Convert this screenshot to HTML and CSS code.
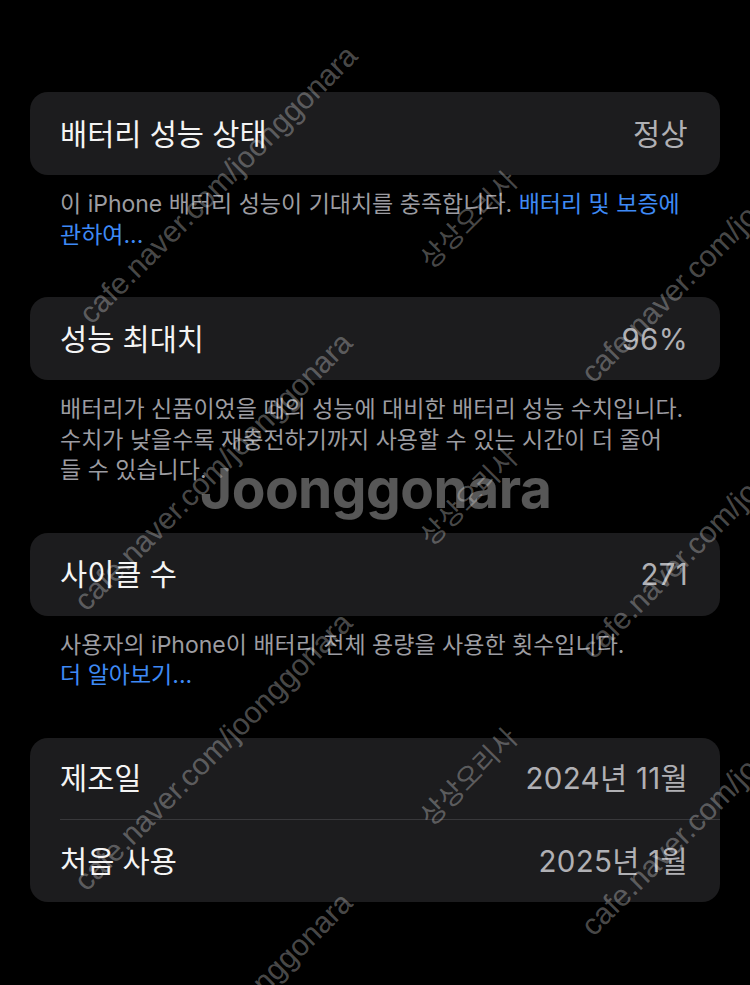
FILE: index.html
```html
<!DOCTYPE html>
<html lang="ko">
<head>
<meta charset="utf-8">
<title>배터리 성능 상태</title>
<link rel="stylesheet" href="styles.css">
</head>
<body>
<main class="screen">
  <section class="group">
    <div class="card">
      <div class="row"><span class="label">배터리 성능 상태</span><span class="value">정상</span></div>
    </div>
    <p class="footer">이 iPhone 배터리 성능이 기대치를 충족합니다. <a class="link">배터리 및 보증에<br>관하여...</a></p>
  </section>

  <section class="group">
    <div class="card">
      <div class="row"><span class="label">성능 최대치</span><span class="value">96%</span></div>
    </div>
    <p class="footer">배터리가 신품이었을 때의 성능에 대비한 배터리 성능 수치입니다.<br>수치가 낮을수록 재충전하기까지 사용할 수 있는 시간이 더 줄어<br>들 수 있습니다.</p>
  </section>

  <section class="group">
    <div class="card">
      <div class="row"><span class="label">사이클 수</span><span class="value">271</span></div>
    </div>
    <p class="footer">사용자의 iPhone이 배터리 전체 용량을 사용한 횟수입니다.<br><a class="link">더 알아보기...</a></p>
  </section>

  <section class="group">
    <div class="card">
      <div class="row"><span class="label">제조일</span><span class="value">2024년 11월</span></div>
      <div class="sep"></div>
      <div class="row"><span class="label">처음 사용</span><span class="value">2025년 1월</span></div>
    </div>
  </section>
</main>

<div class="watermarks" aria-hidden="true">
  <span class="wm wm-url" style="left:95px;top:299px">cafe.naver.com/joonggonara</span>
  <span class="wm wm-url" style="left:90px;top:586px">cafe.naver.com/joonggonara</span>
  <span class="wm wm-url" style="left:90px;top:866px">cafe.naver.com/joonggonara</span>
  <span class="wm wm-url" style="left:90px;top:1146px">cafe.naver.com/joonggonara</span>
  <span class="wm wm-url" style="left:597px;top:358px">cafe.naver.com/joonggonara</span>
  <span class="wm wm-url" style="left:597px;top:634px">cafe.naver.com/joonggonara</span>
  <span class="wm wm-url" style="left:597px;top:911px">cafe.naver.com/joonggonara</span>
  <span class="wm wm-kr" style="left:433px;top:245px">상상오리사</span>
  <span class="wm wm-kr" style="left:433px;top:522px">상상오리사</span>
  <span class="wm wm-kr" style="left:433px;top:802px">상상오리사</span>
  <span class="wm-logo">Joonggonara</span>
</div>
</body>
</html>
```

FILE: styles.css
```css
html, body {
  margin: 0;
  padding: 0;
  background: #000;
}

body {
  position: relative;
  width: 750px;
  height: 985px;
  overflow: hidden;
  font-family: "Inter", "Noto Sans CJK KR", sans-serif;
  color: #fff;
}

.screen {
  padding: 92px 30px 0 30px;
  display: flex;
  flex-direction: column;
}

.group {
  display: flex;
  flex-direction: column;
}

.card {
  background: #1c1c1e;
  border-radius: 18px;
  display: flex;
  flex-direction: column;
}

.row {
  height: 83px;
  display: flex;
  align-items: center;
  justify-content: space-between;
  padding: 0 32px 0 30px;
  font-size: 29.5px;
  line-height: 36px;
}

.card .sep + .row {
  height: 82px;
}

.card .row:first-child:not(:only-child) {
  height: 81px;
}

.label {
  color: #f4f4f4;
}

.value {
  color: #b0b0b4;
  letter-spacing: 0.3px;
}

.sep {
  height: 1px;
  margin-left: 30px;
  background: #38383b;
}

.footer {
  margin: 0 0 47px 0;
  padding: 14px 30px 0 30px;
  font-size: 23px;
  line-height: 30.5px;
  color: #9c9ca1;
  white-space: nowrap;
  word-break: keep-all;
}

.link {
  color: #3e8af5;
}

.watermarks {
  position: absolute;
  left: 0;
  top: 0;
  width: 750px;
  height: 985px;
  overflow: hidden;
  pointer-events: none;
}

.wm {
  position: absolute;
  white-space: nowrap;
  transform-origin: 0 100%;
  transform: rotate(-45deg);
  color: rgba(255, 255, 255, 0.3);
}

.wm-url {
  font-family: "Liberation Sans", Arial, sans-serif;
  font-size: 30px;
  line-height: 30px;
}

.wm-kr {
  font-family: "Noto Sans CJK KR", sans-serif;
  font-size: 27px;
  line-height: 27px;
}

.wm-logo {
  position: absolute;
  left: 200px;
  top: 461px;
  font-family: "Inter", sans-serif;
  font-weight: 700;
  font-size: 55px;
  line-height: 55px;
  letter-spacing: -0.5px;
  color: rgba(255, 255, 255, 0.34);
  white-space: nowrap;
}
```
